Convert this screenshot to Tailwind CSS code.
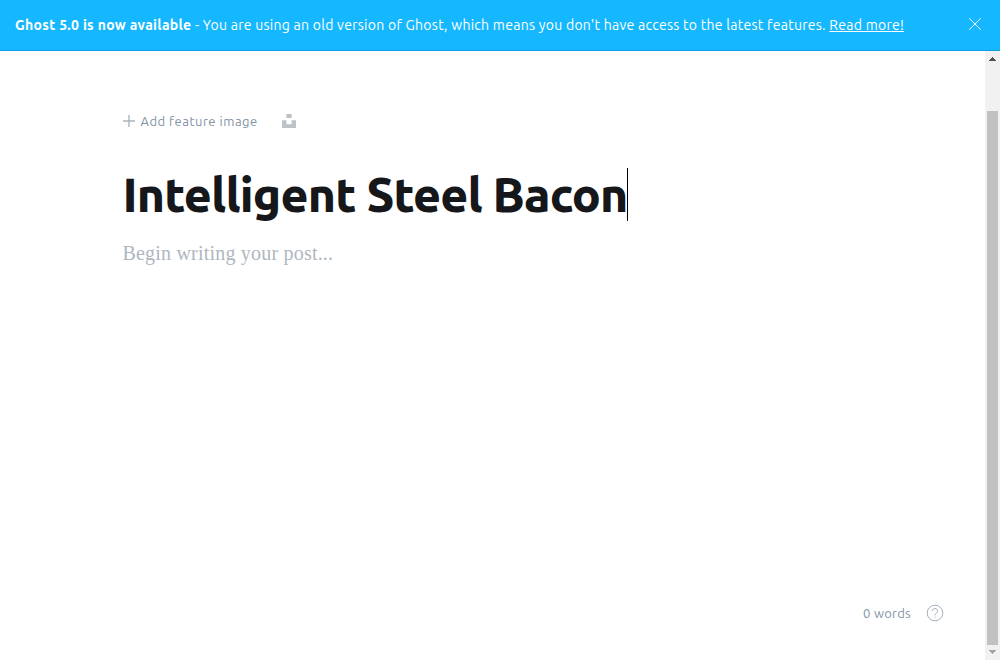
<!DOCTYPE html>
<html lang="en">
<head>
<meta charset="utf-8">
<title>Ghost editor</title>
<script src="https://cdn.jsdelivr.net/npm/@tailwindcss/browser@4"></script>
</head>
<body class="flex h-screen flex-col overflow-hidden bg-white font-['Ubuntu','Noto_Sans',sans-serif]">
  <header class="flex h-[51px] shrink-0 items-start justify-between border-b border-[#0b9fe3] bg-[#15b8ff] pl-[15px] pr-[19px] text-white">
    <p class="whitespace-pre pt-[15px] text-[14px] leading-5 tracking-[0.27px]"><strong class="font-bold tracking-[0.31px]">Ghost 5.0 is now available</strong> - You are using an old version of Ghost, which means you don't have access to the latest features. <a class="underline">Read more!</a></p>
    <svg class="mt-[18px] size-3" viewBox="0 0 12 12" fill="none" stroke="#fff" stroke-width="0.9"><path d="M.2 .2 11.8 11.8M11.8 .2 .2 11.8"/></svg>
  </header>
  <div class="flex min-h-0 flex-1">
    <main class="flex min-w-0 flex-1 flex-col pl-[123px] pt-[60px]">
      <div class="flex h-5 items-center text-[13px] leading-5 text-[#8493a5]">
        <svg class="mr-[5.5px] size-3" viewBox="0 0 12 12" fill="none" stroke="#a9b4bf"><path d="M0 6h12M6 0v12" stroke-width="1.4"/></svg>
        <span class="w-[118.5px] whitespace-nowrap tracking-[0.5px]">Add feature image</span>
        <svg class="ml-[23px] h-[14px] w-[14px]" viewBox="0 0 14 14" fill="#bbc2c8"><path d="M4.4 0h5.2v4H4.4zM0 6.2h4.4v4h5.2v-4H14V14H0z"/></svg>
      </div>
      <div class="-ml-[0.5px] mt-[37px] flex h-[53px] items-center">
        <h1 class="whitespace-nowrap text-[48px] font-extrabold leading-[53px] tracking-[-0.017em] text-[#15171a]">Intelligent Steel Bacon</h1>
        <span class="h-[53px] w-px bg-black"></span>
      </div>
      <p class="-ml-[0.5px] mt-4 font-['Liberation_Serif',serif] text-[20px] leading-8 tracking-[0.2px] text-[#aeb7c1]">Begin writing your post...</p>
      <footer class="mb-[37px] mr-[42px] mt-auto flex h-5 items-center justify-end text-[13px] text-[#8493a5]">
        <span class="mr-4 pt-px tracking-[0.25px]">0 words</span>
        <svg class="size-4 overflow-visible" viewBox="0 0 16 16" fill="none" stroke="#a4b0be" stroke-width="1"><circle cx="8" cy="8" r="7.8"/><path d="M5.4 6.1a2.6 2.6 0 1 1 3.9 2.2C8.3 8.9 8 9.2 8 10.4M8 11.7v1"/></svg>
      </footer>
    </main>
    <aside class="flex w-[15px] flex-col items-center bg-[#f1f1f1]">
      <svg class="h-[15px] w-[15px]" viewBox="0 0 15 15" fill="#505050" shape-rendering="crispEdges"><path d="M4 10h7L7.5 6z"/></svg>
      <div class="mt-[45px] w-[11px] flex-1 bg-[#c1c1c1]"></div>
      <svg class="h-[15px] w-[15px]" viewBox="0 0 15 15" fill="#a3a3a3" shape-rendering="crispEdges"><path d="M4 5h7L7.5 9z"/></svg>
    </aside>
  </div>
</body>
</html>
